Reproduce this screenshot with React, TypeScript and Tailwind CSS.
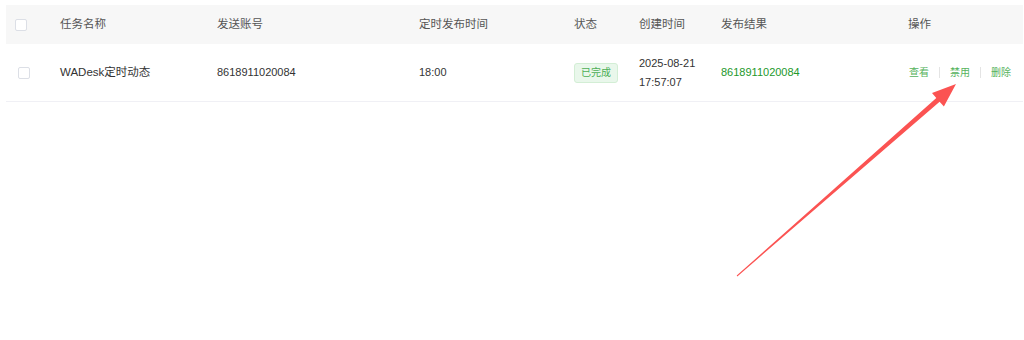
import React from 'react'

const cols = 'grid grid-cols-[42px_157px_202px_155px_65px_82px_187px_1fr]'

function Box({ className = '' }: { className?: string }) {
  return <span className={`block w-[12px] h-[12px] rounded-[2px] border border-[#dcdfe6] bg-white ${className}`} />
}

const headers = ['任务名称', '发送账号', '定时发布时间', '状态', '创建时间', '发布结果', '操作']

export default function App() {
  return (
    <div
      className="relative w-[1024px] h-[340px] bg-white pl-[6px] pr-[1px] pt-[5px] overflow-hidden"
      style={{ fontFamily: '"Liberation Sans", "Noto Sans CJK SC", sans-serif' }}
    >
      {/* 表头 */}
      <div className={`${cols} h-[39px] items-center bg-[#f7f7f7] text-[11.5px] text-[#555]`}>
        <div className="pl-[9px]">
          <Box />
        </div>
        {headers.map(h => (
          <div key={h} className="pl-[12px]">{h}</div>
        ))}
      </div>

      {/* 数据行 */}
      <div className={`${cols} h-[58px] items-center border-b border-[#f0f0f5] text-[11px] text-[#333]`}>
        <div className="pl-[12px]">
          <Box />
        </div>
        <div className="pl-[12px] text-[11.5px]">WADesk定时动态</div>
        <div className="pl-[12px]">8618911020084</div>
        <div className="pl-[12px]">18:00</div>
        <div className="pl-[12px]">
          <span className="inline-flex items-center justify-center w-[44px] h-[20px] rounded-[3px] border border-[#d3eed5] bg-[#e9f7eb] text-[10px] text-[#4cae55]">
            已完成
          </span>
        </div>
        <div className="pl-[12px] leading-[19px]">
          <div>2025-08-21</div>
          <div>17:57:07</div>
        </div>
        <div className="pl-[12px] text-[#23982b]">8618911020084</div>
        <div className="pl-[13px] flex items-center text-[10px] text-[#56b35d]">
          <span>查看</span>
          <span className="mx-[10px] w-px h-[11px] bg-[#e4e4e4]" />
          <span>禁用</span>
          <span className="mx-[10px] w-px h-[11px] bg-[#e4e4e4]" />
          <span>删除</span>
        </div>
      </div>

      {/* 标注箭头 */}
      <svg className="absolute inset-0 pointer-events-none" width="1024" height="340">
        <polygon
          fill="#fb5352"
          points="956,84 943.9,106.6 939.6,101.7 737.3,276.4 736.7,275.6 936.3,98 932,93.1"
        />
      </svg>
    </div>
  )
}
